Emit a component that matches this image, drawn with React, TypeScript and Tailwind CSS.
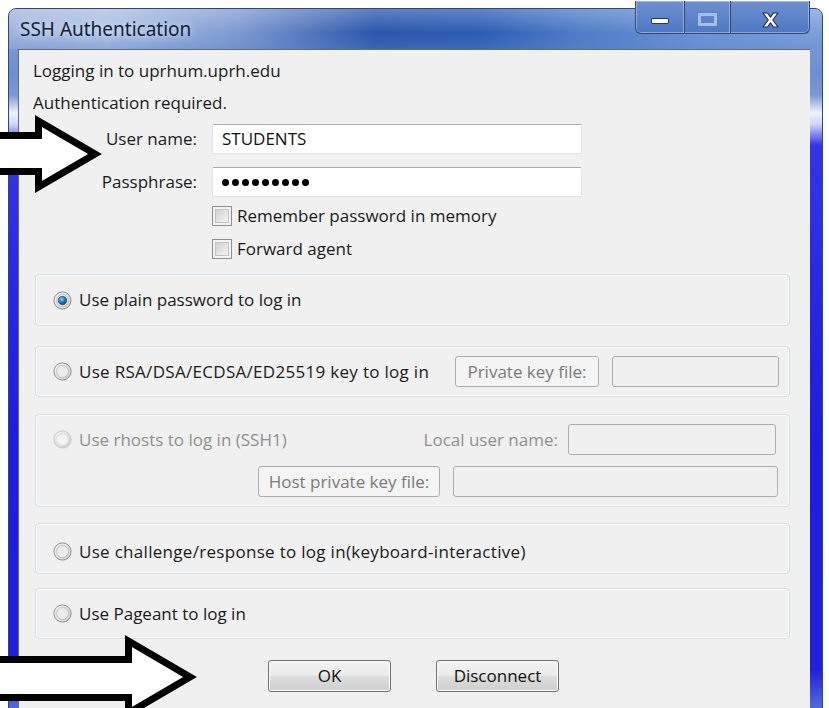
import React from 'react';

// Windows 7 style dialog pieces
function Radio({ checked = false, disabled = false }: { checked?: boolean; disabled?: boolean }) {
  return (
    <svg width="19" height="19" viewBox="0 0 19 19" className="shrink-0">
      <defs>
        <linearGradient id="rb-ring" x1="0" y1="0" x2="1" y2="1">
          <stop offset="0" stopColor="#f8f8f8" />
          <stop offset="1" stopColor="#c9c9c9" />
        </linearGradient>
        <radialGradient id="rb-dot" cx="0.4" cy="0.35" r="0.7">
          <stop offset="0" stopColor="#8fd3ff" />
          <stop offset="0.5" stopColor="#1f7fc9" />
          <stop offset="1" stopColor="#0b3d6e" />
        </radialGradient>
      </defs>
      <circle cx="9.5" cy="9.5" r="8.6" fill="url(#rb-ring)" stroke={disabled ? '#c8c8c8' : '#8e8f8f'} strokeWidth="1" />
      <circle cx="9.5" cy="9.5" r="6" fill={disabled ? '#f2f2f2' : '#ececec'} stroke={disabled ? '#dadada' : '#b9b9b9'} strokeWidth="0.8" />
      {checked && <circle cx="9.5" cy="9.5" r="4.2" fill="url(#rb-dot)" stroke="#163a5f" strokeWidth="0.6" />}
    </svg>
  );
}

function Checkbox() {
  return (
    <div className="w-[20px] h-[20px] border border-[#8e8f8f] bg-[#f4f4f4] p-[2px] shrink-0">
      <div className="w-full h-full border border-[#c2c2c2] bg-[linear-gradient(135deg,#cfcfcf,#f5f5f5)]" />
    </div>
  );
}

function TextBox({ w, children }: { w: string; children?: React.ReactNode }) {
  return (
    <div
      className={`${w} h-[30px] bg-white border border-[#e2e3ea] border-t-[#abadb3] rounded-[2px] flex items-center px-[9px] text-[17px] text-[#111]`}
    >
      {children}
    </div>
  );
}

function DisabledBox({ w }: { w: string }) {
  return <div className={`${w} h-[31px] bg-[#f0f0f0] border border-[#adadad] rounded-[3px] shrink-0`} />;
}

function FlatButton({ w, label }: { w: string; label: string }) {
  return (
    <div
      className={`${w} h-[31px] bg-[#f4f4f4] border border-[#adadad] rounded-[3px] flex items-center justify-center text-[17px] text-[#7a7a7a] shrink-0`}
    >
      {label}
    </div>
  );
}

function PushButton({ label }: { label: string }) {
  return (
    <button className="w-[123px] h-[32px] rounded-[3px] border border-[#707070] bg-[linear-gradient(#f2f2f2_0%,#ebebeb_50%,#dddddd_51%,#cfcfcf_100%)] shadow-[inset_0_0_0_1px_#fcfcfc] text-[17px] text-[#111]">
      {label}
    </button>
  );
}

function Group({ h, mt, children, className = '' }: { h: string; mt: string; children: React.ReactNode; className?: string }) {
  return (
    <div
      className={`${h} ${mt} rounded-[4px] border border-[#d5dfe5] shadow-[inset_0_0_0_1px_#fbfbfb] ${className}`}
    >
      {children}
    </div>
  );
}

function Arrow({ d }: { d: string }) {
  return <path d={d} fill="white" stroke="black" strokeWidth="7" strokeLinejoin="miter" strokeMiterlimit="10" />;
}

export default function App() {
  return (
    <div className="relative w-[829px] h-[708px] overflow-hidden bg-white font-['Open_Sans',sans-serif]">
      {/* window frame */}
      <div className="ml-[8px] mt-[8px] w-[815px] h-[720px] rounded-t-[8px] border border-[#34466b] bg-[linear-gradient(180deg,#8aa4d8_0%,#6d8fd0_9%,#7a98d4_12%,#eef3ff_14.5%,#cfd6fb_16%,#3434e6_19%,#1d1ddc_60%,#2020dc_92%,#6f90d6_100%)] flex flex-col">
        {/* title bar */}
        <div className="relative h-[40px] shrink-0 rounded-t-[7px] bg-[linear-gradient(90deg,#9fb4dd_0%,#aabfe4_12%,#7f9ad2_28%,#2b56ab_45%,#2c5cb4_58%,#4f7cc7_70%,#6b93d6_85%,#7aa0dc_100%)] flex items-start">
          <div className="absolute inset-0 rounded-t-[7px] bg-[linear-gradient(180deg,rgba(255,255,255,0.25),rgba(255,255,255,0)_60%,rgba(90,130,200,0.35))]" />
          <span className="relative mt-[8px] ml-[11px] text-[19px] leading-[24px] text-[#14213a] font-['Noto_Sans',sans-serif] [text-shadow:0_0_8px_rgba(255,255,255,0.9)]">
            SSH Authentication
          </span>
          {/* caption buttons */}
          <div className="relative ml-auto mr-[12px] -mt-[8px] h-[33px] flex rounded-b-[6px] border border-t-0 border-[#34466b] shadow-[inset_0_0_0_1px_rgba(255,255,255,0.35)] bg-[linear-gradient(180deg,#6f8fcf,#4d78c4)] overflow-hidden">
            <div className="w-[49px] flex items-center justify-center pt-[8px] border-r border-[#34466b] shadow-[inset_-1px_0_0_rgba(255,255,255,0.35)]">
              <div className="w-[18px] h-[6px] bg-white border border-[#2a3550] rounded-[1px]" />
            </div>
            <div className="w-[46px] flex items-center justify-center pt-[4px] border-r border-[#34466b] shadow-[inset_-1px_0_0_rgba(255,255,255,0.35)]">
              <div className="w-[19px] h-[13px] border-[3px] border-[#a9bde3] rounded-[1px]" />
            </div>
            <div className="w-[78px] flex items-center justify-center pt-[5px]">
              <svg width="19" height="16" viewBox="0 0 19 16">
                <path d="M2 1 L6.5 1 L9.5 5.2 L12.5 1 L17 1 L11.8 8 L17 15 L12.5 15 L9.5 10.8 L6.5 15 L2 15 L7.2 8 Z" fill="white" stroke="#26324d" strokeWidth="1.2" strokeLinejoin="round" />
              </svg>
            </div>
          </div>
        </div>

        {/* client area */}
        <div className="ml-[9px] w-[792px] flex-1 bg-[#f0f0f0] border-l border-t border-[#5e6c86] text-[17px] leading-[20px] text-[#1a1a1a]">
          <div className="pl-[14px] pt-[11px]">
            <p>Logging in to uprhum.uprh.edu</p>
            <p className="mt-[12px]">Authentication required.</p>
          </div>

          <div className="mt-[11px] flex items-center h-[29px]">
            <span className="w-[178px] text-right">User name:</span>
            <div className="ml-[15px]">
              <TextBox w="w-[370px]">STUDENTS</TextBox>
            </div>
          </div>
          <div className="mt-[14px] flex items-center h-[30px]">
            <span className="w-[178px] text-right">Passphrase:</span>
            <div className="ml-[15px]">
              <TextBox w="w-[370px]">
                <div className="flex gap-[3px]">
                  {Array.from({ length: 9 }).map((_, i) => (
                    <div key={i} className="w-[7px] h-[7px] rounded-full bg-black" />
                  ))}
                </div>
              </TextBox>
            </div>
          </div>

          <div className="mt-[10px] ml-[193px] flex items-center gap-[5px] h-[18px]">
            <Checkbox />
            <span>Remember password in memory</span>
          </div>
          <div className="mt-[15px] ml-[193px] flex items-center gap-[5px] h-[18px]">
            <Checkbox />
            <span>Forward agent</span>
          </div>

          <div className="ml-[16px] w-[755px] mt-[16px] flex flex-col">
            <Group h="h-[52px]" mt="mt-0" className="flex items-center pl-[17px] gap-[7px]">
              <Radio checked />
              <span>Use plain password to log in</span>
            </Group>

            <Group h="h-[51px]" mt="mt-[20px]" className="flex items-center pl-[17px] pr-[10px]">
              <Radio />
              <span className="ml-[7px] tracking-[0.3px]">Use RSA/DSA/ECDSA/ED25519 key to log in</span>
              <div className="ml-auto flex items-center gap-[13px]">
                <FlatButton w="w-[144px]" label="Private key file:" />
                <DisabledBox w="w-[167px]" />
              </div>
            </Group>

            <Group h="h-[93px]" mt="mt-[17px]" className="flex flex-col text-[#8f8f8f]">
              <div className="mt-[9px] flex items-center pl-[17px] pr-[13px] h-[31px]">
                <Radio disabled />
                <span className="ml-[7px]">Use rhosts to log in (SSH1)</span>
                <span className="ml-auto">Local user name:</span>
                <div className="ml-[10px]">
                  <DisabledBox w="w-[208px]" />
                </div>
              </div>
              <div className="mt-[11px] flex items-center justify-end pr-[11px] gap-[13px]">
                <FlatButton w="w-[182px]" label="Host private key file:" />
                <DisabledBox w="w-[325px]" />
              </div>
            </Group>

            <Group h="h-[51px]" mt="mt-[16px]" className="flex items-center pl-[17px] gap-[7px] pt-[6px]">
              <Radio />
              <span className="tracking-[0.3px]">Use challenge/response to log in(keyboard-interactive)</span>
            </Group>

            <Group h="h-[51px]" mt="mt-[14px]" className="flex items-center pl-[17px] gap-[7px]">
              <Radio />
              <span>Use Pageant to log in</span>
            </Group>
          </div>

          <div className="mt-[21px] flex justify-center gap-[45px] pr-[2px]">
            <PushButton label="OK" />
            <PushButton label="Disconnect" />
          </div>
        </div>
      </div>

      {/* annotation arrows drawn over the dialog */}
      <svg className="absolute inset-0 pointer-events-none" width="829" height="708" viewBox="0 0 829 708">
        <Arrow d="M-10 135.5 L38.5 135.5 L38.5 121 L95 154 L38.5 187 L38.5 171.5 L-10 171.5 Z" />
        <Arrow d="M-10 659.5 L128.5 659.5 L128.5 641 L190 677 L128.5 713 L128.5 697.5 L-10 697.5 Z" />
      </svg>
    </div>
  );
}
